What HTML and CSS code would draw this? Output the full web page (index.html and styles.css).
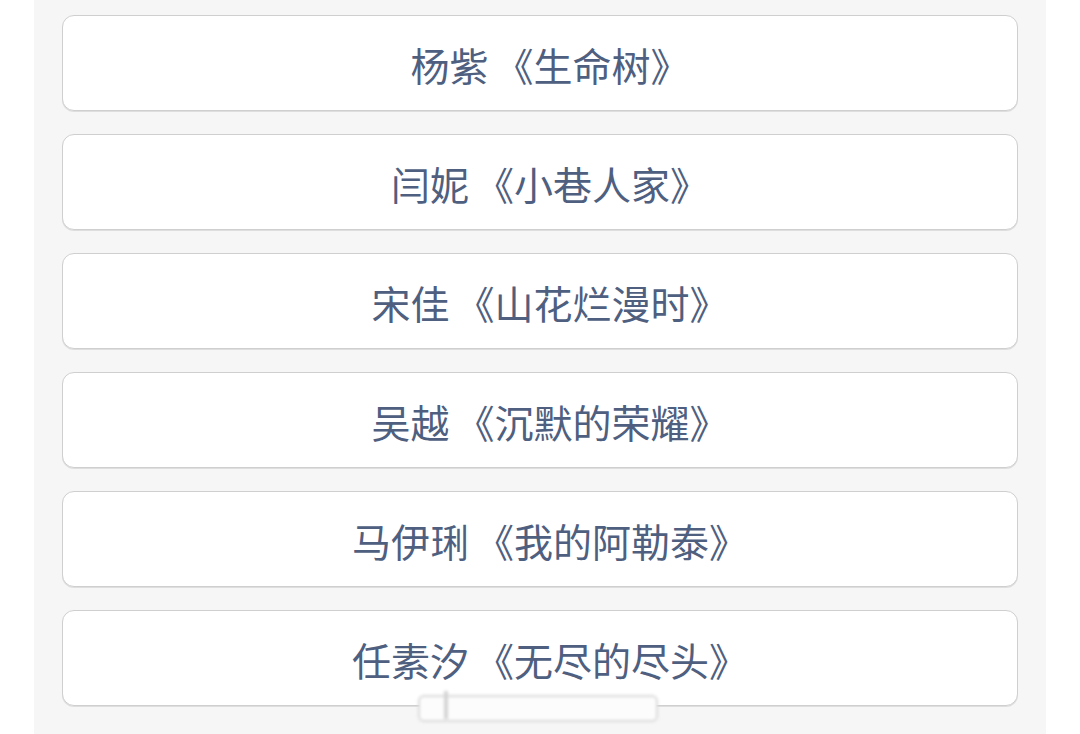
FILE: index.html
```html
<!DOCTYPE html>
<html lang="zh-CN">
<head>
    <meta charset="UTF-8">
    <meta name="viewport" content="width=device-width, initial-scale=1.0">
    <title>投票选项</title>
    <link rel="stylesheet" href="styles.css">
</head>
<body>
    <div class="panel">
        <ul class="options">
            <li>杨紫<span>《生命树》</span></li>
            <li>闫妮<span>《小巷人家》</span></li>
            <li>宋佳<span>《山花烂漫时》</span></li>
            <li>吴越<span>《沉默的荣耀》</span></li>
            <li>马伊琍<span>《我的阿勒泰》</span></li>
            <li>任素汐<span>《无尽的尽头》</span></li>
        </ul>
        <div class="mark"></div>
    </div>
</body>
</html>
```

FILE: styles.css
```css
body,ul,li,div { margin:0; padding:0; }
ul,li { list-style: none; }
body { background: #fff; font-family: "Noto Sans CJK SC", "Noto Sans", sans-serif; }
.panel { width: 956px; min-height: 719px; margin-left: 34px; padding: 15px 28px 0; background: #f6f6f6; position: relative; }
.options { display: flex; flex-direction: column; gap: 23px; }
.options li { height: 96px; display: flex; align-items: center; justify-content: center; padding: 2px 0 0 20px; box-sizing: border-box; background: #fff; border: 1px solid #cfcfcf; border-radius: 12px; box-shadow: 0 1px 0 #dedede; color: #4f5f7f; font-size: 39px; }
/* 书名号前略留空隙 */
.options li span { margin-left: 6px; }
/* 底部模糊水印 */
.mark { position: absolute; left: 384px; top: 695px; width: 236px; height: 23px; border: 2px solid #d9d9d9; border-radius: 6px; background: #fcfcfc; filter: blur(1.5px); }
.mark::before { content: ""; position: absolute; left: 24px; top: -6px; width: 4px; height: 28px; background: #d4d4d4; }
```
